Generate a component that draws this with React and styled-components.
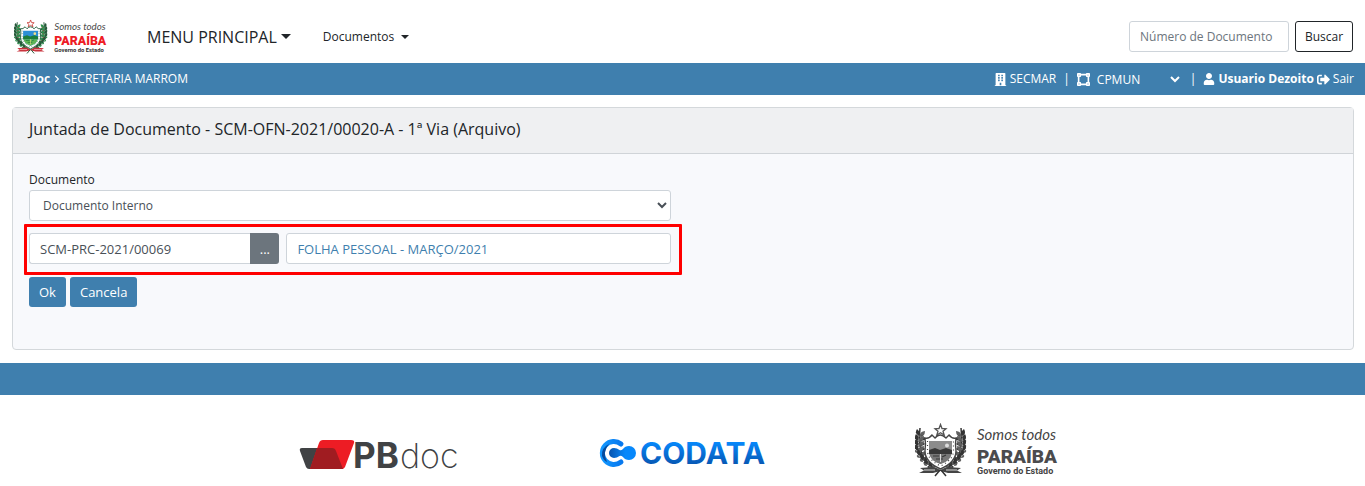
import React, { useState } from 'react';
import styled, { createGlobalStyle } from 'styled-components';
import { FaBuilding, FaChevronRight, FaSignOutAlt, FaUser, FaVectorSquare } from 'react-icons/fa';

const GlobalStyle = createGlobalStyle`
    * {
        box-sizing: border-box;
    }

    body {
        margin: 0;
        background: #fff;
        color: #212529;
        font-family: 'Open Sans', 'Noto Sans', sans-serif;
        font-size: 13px;
        line-height: 20px;
    }

    button, input, select {
        font-family: inherit;
        font-size: inherit;
        line-height: inherit;
    }
`;

const Navbar = styled.nav`
    display: flex;
    align-items: center;
    height: 63px;
    padding: 10px 12px 0 14px;
`;

const Brand = styled.a`
    display: flex;
    margin-right: 40px;
`;

const MenuButton = styled.button`
    display: flex;
    align-items: center;
    gap: ${props => (props.$large ? '4px' : '7px')};
    padding: 0;
    margin-right: 32px;
    border: 0;
    background: none;
    color: #212529;
    font-size: ${props => (props.$large ? '16px' : '12px')};
    cursor: pointer;

    &::after {
        content: '';
        border-top: ${props => (props.$large ? '5px' : '4px')} solid;
        border-left: ${props => (props.$large ? '5px' : '4px')} solid transparent;
        border-right: ${props => (props.$large ? '5px' : '4px')} solid transparent;
    }
`;

const SearchForm = styled.form`
    display: flex;
    gap: 6px;
    margin-left: auto;
`;

const Input = styled.input`
    flex: 1;
    min-width: 0;
    height: 31px;
    padding: 4px 10px;
    border: 1px solid #ced4da;
    border-radius: 3px;
    background: #fff;
    color: ${props => (props.$linked ? '#3f7fae' : '#495057')};

    &::placeholder {
        color: #6c757d;
    }
`;

const SearchInput = styled(Input)`
    flex: none;
    width: 160px;
    font-size: 12px;
`;

const OutlineButton = styled.button`
    width: 58px;
    height: 31px;
    padding: 0;
    border: 1px solid #212529;
    border-radius: 3px;
    background: #fff;
    color: #212529;
    font-size: 12px;
    cursor: pointer;
`;

const Bar = styled.div`
    display: flex;
    align-items: center;
    justify-content: space-between;
    height: 32px;
    padding: 0 11px 0 12px;
    background: #3f7fae;
    color: #fff;
    font-size: 12px;
`;

const BarGroup = styled.div`
    display: flex;
    align-items: center;
    gap: ${props => props.$gap || 3}px;
`;

const BarSelect = styled.select`
    width: 90px;
    padding: 0;
    border: 0;
    background: transparent;
    color: #fff;

    option {
        color: #212529;
    }
`;

const BarLink = styled.a`
    display: flex;
    align-items: center;
    gap: 3px;
    color: #fff;
    text-decoration: none;
`;

const Card = styled.main`
    margin: 12px 11px 13px 12px;
    border: 1px solid #d4d8db;
    border-radius: 4px;
    background: #f8f9fc;
`;

const CardHeader = styled.header`
    padding: 11px 16px 14px;
    border-bottom: 1px solid #d0d4d8;
    background: #eff0f2;
`;

const Title = styled.h1`
    margin: 0;
    font-size: 16px;
    line-height: 20px;
    font-weight: 500;
`;

const CardBody = styled.form`
    padding: 16px 16px 42px;
`;

const Fields = styled.div`
    width: calc(50% - 12px);
`;

const Label = styled.label`
    display: block;
    font-size: 12px;
`;

const Select = styled.select`
    display: block;
    width: 100%;
    height: 31px;
    padding: 4px 9px;
    border: 1px solid #ced4da;
    border-radius: 3px;
    background: #fff;
    color: #495057;
    font-size: 12px;
`;

const Highlight = styled.div`
    display: flex;
    gap: 7px;
    margin: 3px -11px 2px -5px;
    padding: 6px 8px 8px 2px;
    border: 3px solid #ff0000;
    border-radius: 1px;
`;

const InputGroup = styled.div`
    display: flex;
    width: 39%;

    ${Input} {
        border-right: 0;
        border-radius: 3px 0 0 3px;
    }
`;

const PickButton = styled.button`
    width: 29px;
    padding: 0;
    border: 0;
    border-radius: 0 3px 3px 0;
    background: #6c757d;
    color: #fff;
    cursor: pointer;
`;

const Actions = styled.div`
    display: flex;
    gap: 4px;
`;

const PrimaryButton = styled.button`
    height: 30px;
    padding: 0 10px;
    border: 0;
    border-radius: 3px;
    background: #3f7fae;
    color: #fff;
    cursor: pointer;
`;

const FooterBand = styled.div`
    height: 32px;
    background: #3f7fae;
`;

const Logos = styled.div`
    display: grid;
    grid-template-columns: repeat(3, 1fr);
    align-items: center;
    justify-items: center;
    max-width: 912px;
    margin: 0 auto;
    padding-top: 28px;
`;

const Partner = styled.div`
    display: flex;
    padding-top: 8px;
`;

const colorCrest = {
    leaf: '#2f8f4e', leafDark: '#27583a', ribbon: '#c8303a', star: '#c9413b',
    border: '#1d5b38', sky: '#2c8fd6', hill: '#1c7d3b', ground: '#5fb554', sun: '#f3e08a',
    script: '#4a4a4a', name: '#ee1c25', sub: '#333333',
};

const grayCrest = {
    leaf: '#606060', leafDark: '#333333', ribbon: '#444444', star: '#555555',
    border: '#444444', sky: '#8c8c8c', hill: '#383838', ground: '#777777', sun: '#dddddd',
    script: '#444444', name: '#4b4b4d', sub: '#444444',
};

const leaves = [[4, 13], [3, 18], [3, 23], [3, 28], [5, 33], [8, 37], [12, 41], [17, 44]];

const Branch = ({ c, flip }) => (
    <g transform={flip ? 'translate(51 0) scale(-1 1)' : undefined}>
        <path d="M5 5C3 22 5 38 21 47" fill="none" stroke={c.leafDark} strokeWidth="1.5" />
        {leaves.map(([x, y], i) => (
            <g key={i} transform={`translate(${x} ${y})`}>
                <path d="M0 0Q-5 -2 -2 -7Q2 -4 0 0Z" fill={c.leafDark} />
                <path d="M0 1Q1 -5 6 -5Q6 1 0 1Z" fill={c.leaf} />
                <path d="M0 3Q4 -1 7 3Q4 6 0 3Z" fill={c.leafDark} />
                <path d="M0 2Q-4 2 -3 -1Q0 -1 0 2Z" fill={c.leaf} />
                <circle cx="3" cy="0" r="0.8" fill={c.ribbon} />
            </g>
        ))}
    </g>
);

const ParaibaLogo = ({ width, c }) => (
    <svg width={width} viewBox="0 0 143 54" role="img" aria-label="Governo da Paraíba">
        <Branch c={c} />
        <Branch c={c} flip />
        <path d="M25.5 1.5L27 5.5L31 5.7L28 8.3L29.2 12L25.5 9.8L21.8 12L23 8.3L20 5.7L24 5.5Z" fill="#fff" stroke={c.star} strokeWidth="1.3" />
        <path d="M10 15Q14 16 17 12L20 15Q25 9 31 15L34 12Q37 16 41 15Q40 21 41 28Q41 39 25.5 46Q10 39 10 28Q11 21 10 15Z" fill="#fff" stroke={c.border} strokeWidth="1.4" />
        <path d="M12.5 18V28Q13 37 25.5 43Q38 37 38.5 28V18" fill="none" stroke={c.border} strokeWidth="1.2" strokeDasharray="1 3" />
        <path d="M14 18H37V29Q36 38 25.5 41Q15 38 14 29Z" fill={c.sky} />
        <path d="M14 27L20 25L25 27L31 25L37 27V31H14Z" fill={c.hill} />
        <path d="M14.5 31H36.5Q35 38 25.5 41Q16 38 14.5 31Z" fill={c.ground} />
        <circle cx="32" cy="22.5" r="2" fill={c.sun} />
        <path d="M18 33H24M27 34L31 32M21 36H28" stroke={c.hill} strokeWidth="1.2" />
        <path d="M25.5 31V39" stroke={c.sun} strokeWidth="1" />
        <path d="M5 45L18 44L25.5 47L33 44L46 45L42 47.5L47 50H33L25.5 48L18 50H4L9 47.5Z" fill={c.ribbon} />
        <path d="M9 47H20M31 47H42" stroke="#fff" strokeWidth="0.8" />
        <path d="M25 47L20 53M26 47L31 53" stroke={c.leafDark} strokeWidth="1.5" />
        <text x="62" y="17" fill={c.script} fontFamily="Lato" fontSize="15" fontStyle="italic" fontWeight="400">Somos todos</text>
        <text x="62" y="40" fill={c.name} fontFamily="Roboto" fontSize="19" fontWeight="900">PARAÍBA</text>
        <text x="62" y="51" fill={c.sub} fontFamily="Roboto" fontSize="9" fontWeight="700">Governo do Estado</text>
    </svg>
);

const PbdocLogo = () => (
    <svg width="160" height="46" viewBox="0 -8 160 46" role="img" aria-label="PBdoc">
        <path d="M3 9H38L44 30H10Q8 30 7 28L1 12Q0 9 3 9Z" fill="#404244" />
        <path d="M24 1H52Q56 1 55 4L46 28Q45 30 43 30H11L20 4Q21 1 24 1Z" fill="#ed1c24" />
        <path d="M18 9H33Q36 9 37 12L44 30H11Z" fill="#a01c21" />
        <text x="54" y="29" fill="#404244" fontFamily="Inter" fontSize="35" fontWeight="700">PB</text>
        <text x="101" y="29" fill="#404244" fontFamily="Inter" fontSize="34" fontWeight="200">doc</text>
    </svg>
);

const CodataLogo = () => (
    <svg width="168" height="46" viewBox="0 -8 168 46" role="img" aria-label="Codata">
        <defs>
            <linearGradient id="codata" x1="0" y1="0" x2="0" y2="1">
                <stop offset="0.2" stopColor="#0788fb" />
                <stop offset="0.85" stopColor="#0755b0" />
            </linearGradient>
            <linearGradient id="ring" x1="0" y1="0" x2="1" y2="0">
                <stop offset="0" stopColor="#1297ff" />
                <stop offset="1" stopColor="#0879ee" />
            </linearGradient>
            <linearGradient id="link" x1="0" y1="0" x2="1" y2="0">
                <stop offset="0" stopColor="#0753ad" />
                <stop offset="0.6" stopColor="#0788fb" />
            </linearGradient>
        </defs>
        <path d="M22 5A11.5 11.5 0 1 0 22 23" fill="none" stroke="url(#ring)" strokeWidth="5" strokeLinecap="round" />
        <path d="M10 5Q2 9 3 17Q5 22 8 23Q3 13 10 5Z" fill="#064b9e" />
        <path d="M15 9Q18 9 20.5 11Q22 12 24 10Q26 7 30 7A7 7 0 0 1 30 21Q26 21 24 18Q22 16 20.5 17Q18 19 15 19A5 5 0 0 1 15 9Z" fill="url(#link)" />
        <text x="41" y="25" fill="url(#codata)" fontFamily="Inter" fontSize="30" fontWeight="700">CODATA</text>
    </svg>
);

const App = () => {
    const [codigo, setCodigo] = useState('SCM-PRC-2021/00069');
    const [descricao, setDescricao] = useState('FOLHA PESSOAL - MARÇO/2021');

    return (
        <>
            <GlobalStyle />
            <Navbar>
                <Brand href="#"><ParaibaLogo width="93" c={colorCrest} /></Brand>
                <MenuButton $large type="button">MENU PRINCIPAL</MenuButton>
                <MenuButton type="button">Documentos</MenuButton>
                <SearchForm onSubmit={e => e.preventDefault()}>
                    <SearchInput aria-label="Número de Documento" placeholder="Número de Documento" />
                    <OutlineButton type="submit">Buscar</OutlineButton>
                </SearchForm>
            </Navbar>
            <Bar>
                <BarGroup>
                    <strong>PBDoc</strong>
                    <FaChevronRight size={8} />
                    <span>SECRETARIA MARROM</span>
                </BarGroup>
                <BarGroup $gap={7}>
                    <BarGroup><FaBuilding size={13} /><span>SECMAR</span></BarGroup>
                    <span>|</span>
                    <BarGroup>
                        <FaVectorSquare size={13} />
                        <BarSelect aria-label="Lotação" defaultValue="CPMUN">
                            <option>CPMUN</option>
                        </BarSelect>
                    </BarGroup>
                    <span>|</span>
                    <BarGroup>
                        <FaUser size={12} />
                        <strong>Usuario Dezoito</strong>
                        <BarLink href="#"><FaSignOutAlt size={13} />Sair</BarLink>
                    </BarGroup>
                </BarGroup>
            </Bar>
            <Card>
                <CardHeader>
                    <Title>Juntada de Documento - SCM-OFN-2021/00020-A - 1ª Via (Arquivo)</Title>
                </CardHeader>
                <CardBody onSubmit={e => e.preventDefault()}>
                    <Fields>
                        <Label htmlFor="tipo">Documento</Label>
                        <Select id="tipo" defaultValue="interno">
                            <option value="interno">Documento Interno</option>
                        </Select>
                        <Highlight>
                            <InputGroup>
                                <Input aria-label="Código do documento" value={codigo} onChange={e => setCodigo(e.target.value)} />
                                <PickButton type="button" aria-label="Selecionar documento">...</PickButton>
                            </InputGroup>
                            <Input $linked aria-label="Descrição" value={descricao} onChange={e => setDescricao(e.target.value)} />
                        </Highlight>
                    </Fields>
                    <Actions>
                        <PrimaryButton type="submit">Ok</PrimaryButton>
                        <PrimaryButton type="button">Cancela</PrimaryButton>
                    </Actions>
                </CardBody>
            </Card>
            <footer>
                <FooterBand />
                <Logos>
                    <Partner><PbdocLogo /></Partner>
                    <Partner><CodataLogo /></Partner>
                    <ParaibaLogo width="143" c={grayCrest} />
                </Logos>
            </footer>
        </>
    );
};

export default App;
